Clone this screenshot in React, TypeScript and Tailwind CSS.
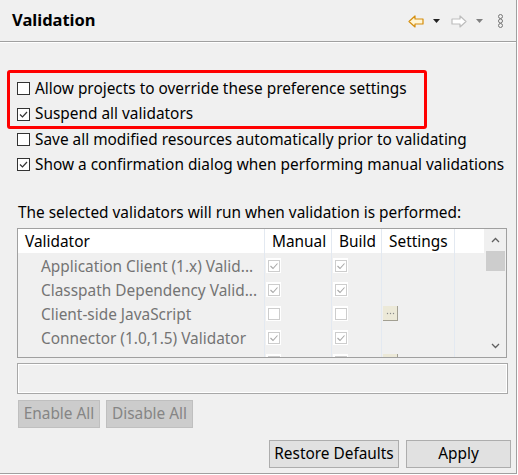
import React from "react";

const font = "font-['Noto_Sans',sans-serif]";

function Check({ checked, className }: { checked?: boolean; className?: string }) {
  return (
    <div className={"w-[13px] h-[13px] border border-[#333333] bg-white flex items-center justify-center shrink-0 " + (className ?? "")}>
      {checked && (
        <svg width="11" height="11" viewBox="0 0 11 11">
          <path d="M2 5.5 L4.5 8 L9 3" fill="none" stroke="#333333" strokeWidth="1.2" />
        </svg>
      )}
    </div>
  );
}

function CheckRow({ checked, label, h }: { checked?: boolean; label: string; h: string }) {
  return (
    <div className={"flex items-center pl-[17px] gap-[5px] " + h}>
      <Check checked={checked} />
      <span className="text-[15.4px] text-black leading-none whitespace-nowrap">{label}</span>
    </div>
  );
}

function CellCheck({ checked }: { checked?: boolean }) {
  return (
    <div className="w-[15px] h-[15px] bg-white flex items-center justify-center">
      <div className="w-[12px] h-[12px] border border-[#cdcdcd] flex items-center justify-center">
        {checked && (
          <svg width="10" height="10" viewBox="0 0 10 10">
            <path d="M1.5 5 L4 7.5 L8.5 2.5" fill="none" stroke="#a8a8a8" strokeWidth="1.1" />
          </svg>
        )}
      </div>
    </div>
  );
}

function DotsButton({ dots }: { dots: boolean }) {
  return (
    <div className="w-[15px] h-[15px] bg-[#ece9d8] border-r border-b border-[#a29f92] flex items-center justify-center">
      {dots && (
        <svg width="9" height="3" viewBox="0 0 9 3">
          <circle cx="1.5" cy="1.5" r="0.7" fill="#8a8a8a" />
          <circle cx="4.5" cy="1.5" r="0.7" fill="#8a8a8a" />
          <circle cx="7.5" cy="1.5" r="0.7" fill="#8a8a8a" />
        </svg>
      )}
    </div>
  );
}

const cols = "grid grid-cols-[246px_67px_50px_73px_30px]";

// last row only peeks out above the bottom edge of the list
const rows = [
  { name: "Application Client (1.x) Valid...", m: true, b: true, s: false },
  { name: "Classpath Dependency Valid...", m: true, b: true, s: false },
  { name: "Client-side JavaScript", m: false, b: false, s: true },
  { name: "Connector (1.0,1.5) Validator", m: true, b: true, s: false },
  { name: "", m: true, b: true, s: true },
];

function Arrow({ left, stroke, fill }: { left?: boolean; stroke: string; fill: string }) {
  return (
    <svg width="16" height="13" viewBox="0 0 16 13" className={left ? "" : "-scale-x-100"}>
      <path d="M1 6.5 L7 1 L7 4 L15 4 L15 9 L7 9 L7 12 Z" fill={fill} stroke={stroke} strokeWidth="1.2" strokeLinejoin="round" />
    </svg>
  );
}

function Caret({ color }: { color: string }) {
  return (
    <svg width="7" height="4" viewBox="0 0 7 4">
      <path d="M0 0 L7 0 L3.5 4 Z" fill={color} />
    </svg>
  );
}

export default function App() {
  return (
    <div className={"w-[518px] h-[475px] bg-white " + font}>
      <div className="w-[517px] h-[474px] bg-[#f0f0f0] border-r border-b border-[#a0a0a0] flex flex-col">
        {/* header */}
        <div className="h-[42px] shrink-0 border-b border-[#a0a0a0] flex items-center justify-between pl-[12px] pr-[12px]">
          <span className="text-[16.5px] font-bold text-black leading-none">Validation</span>
          <div className="flex items-center pt-[1px]">
            <Arrow left stroke="#d58e0c" fill="#fff5d6" />
            <div className="ml-[9px]"><Caret color="#222222" /></div>
            <div className="ml-[11px]"><Arrow stroke="#bdbdbd" fill="#ffffff" /></div>
            <div className="ml-[9px]"><Caret color="#808080" /></div>
            <svg width="7" height="14" viewBox="0 0 7 14" className="ml-[14px]">
              <circle cx="3.5" cy="2.5" r="2" fill="none" stroke="#777777" strokeWidth="1" />
              <circle cx="3.5" cy="7" r="2" fill="none" stroke="#777777" strokeWidth="1" />
              <circle cx="3.5" cy="11.5" r="2" fill="none" stroke="#777777" strokeWidth="1" />
            </svg>
          </div>
        </div>
        <div className="h-px shrink-0 bg-white" />

        {/* options */}
        <div className="relative mt-[33px]">
          <CheckRow label="Allow projects to override these preference settings" h="h-[25px]" />
          <CheckRow checked label="Suspend all validators" h="h-[26px]" />
          <CheckRow label="Save all modified resources automatically prior to validating" h="h-[25px]" />
          <CheckRow checked label="Show a confirmation dialog when performing manual validations" h="h-[25px]" />
          <div className="absolute left-[7px] top-[-6px] w-[420px] h-[59px] border-[3px] border-[#ff0000] rounded-[3px]" />
        </div>

        <div className="mt-[26px] h-[20px] pl-[18px] text-[15.4px] text-black leading-[20px] whitespace-nowrap">
          The selected validators will run when validation is performed:
        </div>

        {/* table */}
        <div className="mt-[5px] ml-[17px] w-[490px] h-[130px] shrink-0 border border-[#a0a0a0] flex overflow-hidden">
          <div className="flex-1 flex flex-col">
            <div className={cols + " h-[24px] shrink-0 bg-white text-[15.4px] text-black leading-none"}>
              <div className="flex items-center pl-[7px] pt-[1px]">Validator</div>
              <div className="flex items-center pl-[7px] pt-[1px] border-l border-[#e3e9f1]">Manual</div>
              <div className="flex items-center pl-[7px] pt-[1px] border-l border-[#e3e9f1]">Build</div>
              <div className="flex items-center pl-[7px] pt-[1px] border-l border-[#e3e9f1]">Settings</div>
              <div className="border-l border-[#e3e9f1]" />
            </div>
            {rows.map((r, i) => (
              <div key={i} className={cols + " h-[24px] shrink-0 text-[15.4px] text-[#747474] leading-none"}>
                <div className="flex items-center pl-[23px] pt-[3px] whitespace-nowrap overflow-hidden">{r.name}</div>
                <div className="flex items-center pl-[1px] pt-[1px] border-l border-[#e3e9f1]"><CellCheck checked={r.m} /></div>
                <div className="flex items-center pl-[1px] pt-[1px] border-l border-[#e3e9f1]"><CellCheck checked={r.b} /></div>
                <div className="flex items-center pl-[1px] pt-[1px] border-l border-[#e3e9f1]">{r.s && <DotsButton dots={r.name !== ""} />}</div>
                <div className="border-l border-[#e3e9f1]" />
              </div>
            ))}
          </div>
          {/* scrollbar */}
          <div className="w-[22px] flex flex-col items-center">
            <div className="h-[22px] flex items-center justify-center">
              <svg width="9" height="6" viewBox="0 0 9 6"><path d="M1 5 L4.5 1.5 L8 5" fill="none" stroke="#606060" strokeWidth="1.3" /></svg>
            </div>
            <div className="w-[19px] h-[20px] bg-[#cdcdcd]" />
            <div className="flex-1" />
            <div className="h-[22px] flex items-center justify-center">
              <svg width="9" height="6" viewBox="0 0 9 6"><path d="M1 1 L4.5 4.5 L8 1" fill="none" stroke="#606060" strokeWidth="1.3" /></svg>
            </div>
          </div>
        </div>

        {/* text field */}
        <div className="mt-[5px] ml-[17px] w-[491px] h-[31px] shrink-0 border border-[#a8a8a8]">
          <div className="w-full h-full border border-white" />
        </div>

        {/* enable / disable */}
        <div className="mt-[6px] ml-[18px] flex gap-[6px]">
          <div className="w-[82px] h-[28px] bg-[#cccccc] border border-[#bfbfbf] flex items-center justify-center text-[15.4px] text-[#858585] leading-none">Enable All</div>
          <div className="w-[87px] h-[28px] bg-[#cccccc] border border-[#bfbfbf] flex items-center justify-center text-[15.4px] text-[#858585] leading-none">Disable All</div>
        </div>

        {/* bottom buttons */}
        <div className="mt-auto mb-[5px] pr-[5px] flex justify-end gap-[7px]">
          <div className="w-[130px] h-[28px] bg-[#e1e1e1] border border-[#adadad] flex items-center justify-center text-[15.4px] text-black leading-none">Restore Defaults</div>
          <div className="w-[105px] h-[28px] bg-[#e1e1e1] border border-[#adadad] flex items-center justify-center text-[15.4px] text-black leading-none">Apply</div>
        </div>
      </div>
    </div>
  );
}
